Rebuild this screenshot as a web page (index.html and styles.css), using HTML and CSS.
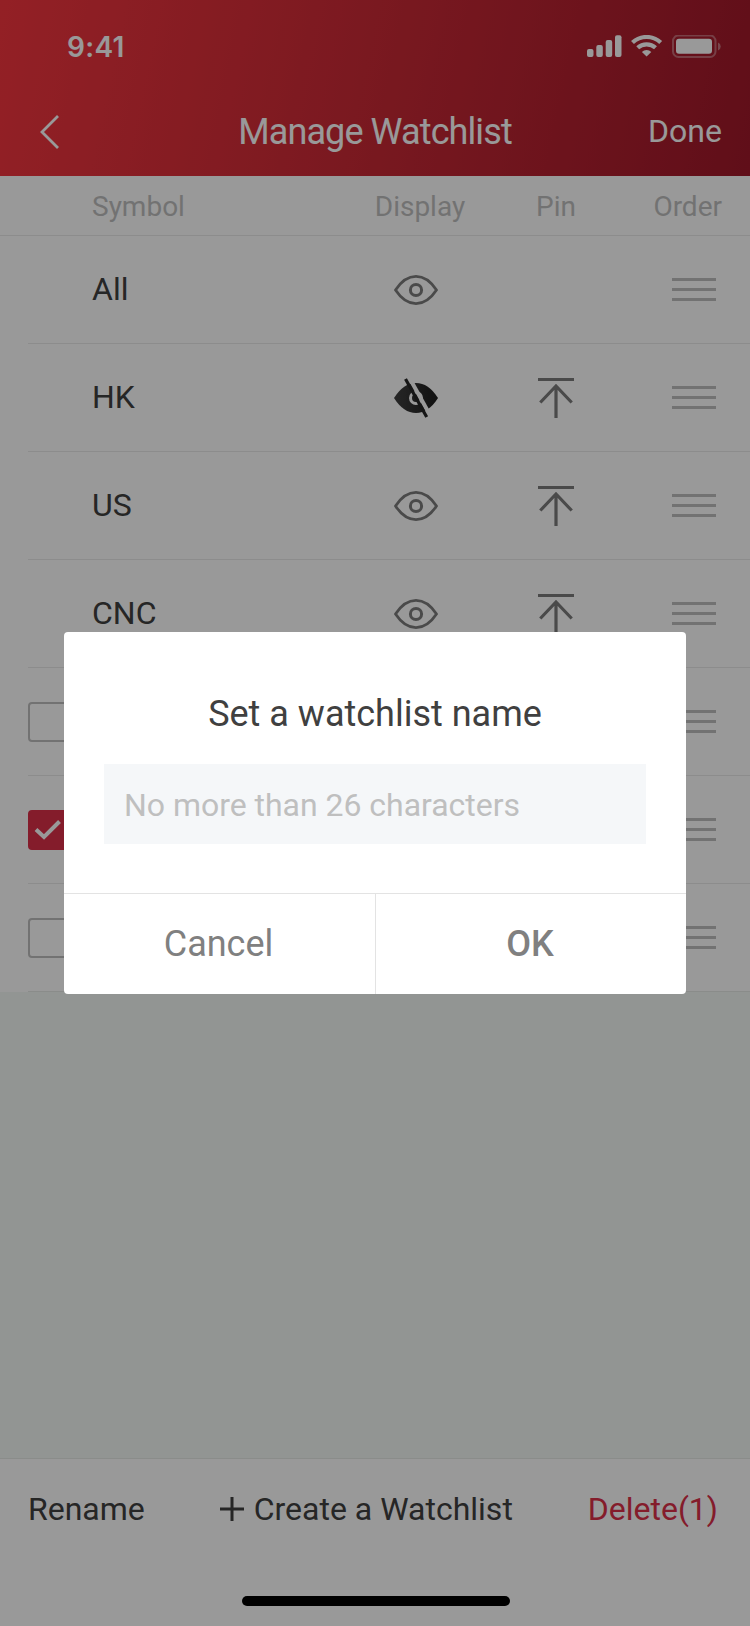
FILE: index.html
```html
<!DOCTYPE html>
<html lang="en">
<head>
<meta charset="utf-8">
<title>Manage Watchlist</title>
<link rel="stylesheet" href="styles.css">
</head>
<body>
<svg class="defs" width="0" height="0" aria-hidden="true">
  <symbol id="eye" viewBox="0 0 44 40"><path d="M1.500 20Q10.500 6.400 22 6.400T42.500 20Q33.500 33.600 22 33.600T1.500 20Z" fill="none" stroke="#7c7c7c" stroke-width="2.800" stroke-linejoin="round"/><circle cx="22" cy="20" r="5.600" fill="none" stroke="#7c7c7c" stroke-width="3"/></symbol>
  <symbol id="pin" viewBox="0 0 36 40"><path d="M0 1.500H36" stroke="#7c7c7c" stroke-width="3"/><path d="M18 40V8M2.300 24.500 18 8l15.700 16.500" fill="none" stroke="#7c7c7c" stroke-width="3.200"/></symbol>
  <symbol id="drag" viewBox="0 0 44 23"><path d="M0 1.500H44M0 11.500H44M0 21.500H44" stroke="#bfbfbf" stroke-width="3"/></symbol>
</svg>
<div class="screen">
  <header class="top">
    <div class="status">
      <span class="time">9:41</span>
      <svg class="status-icons" width="136" height="24" viewBox="0 0 136 24" fill="#fff">
        <rect x="0" y="14" width="6.500" height="8" rx="2"/><rect x="9.300" y="10" width="6.500" height="12" rx="2"/><rect x="18.700" y="5" width="6.500" height="17" rx="2"/><rect x="28" y="0.300" width="6.500" height="21.700" rx="2"/>
        <g fill="none" stroke="#fff" stroke-width="4.200"><path d="M45.500 7.600A20.500 20.500 0 0 1 73.700 7.600"/><path d="M50.700 12.800A13 13 0 0 1 68.500 12.800"/></g>
        <path d="M59.600 21.500 54.900 17A6.800 6.800 0 0 1 64.300 17Z"/>
        <rect x="86" y="0.500" width="42.500" height="21.500" rx="5.500" fill="none" stroke="#fff" stroke-opacity=".35" stroke-width="2"/>
        <rect x="89" y="3.700" width="36" height="15" rx="3"/>
        <path d="M131 7.500q2.700 1 2.700 4t-2.700 4Z" fill-opacity=".4"/>
      </svg>
    </div>
    <div class="nav">
      <svg class="back" width="20" height="36" viewBox="0 0 20 36"><path d="M18 2 2 18 18 34" fill="none" stroke="#fff" stroke-width="2.800"/></svg>
      <h1 class="title">Manage Watchlist</h1>
      <span class="done">Done</span>
    </div>
  </header>
  <div class="cols head"><span>Symbol</span><span class="c">Display</span><span class="c">Pin</span><span class="r">Order</span></div>
  <main class="list">
    <div class="cols row"><span class="name">All</span><svg class="eye"><use href="#eye"/></svg><i></i><svg class="drag"><use href="#drag"/></svg></div>
    <div class="cols row"><span class="name">HK</span>
      <svg class="eye" viewBox="0 0 44 40">
        <defs><linearGradient id="ink"><stop offset="0" stop-color="#404040"/><stop offset="1" stop-color="#1c1c1c"/></linearGradient>
        <mask id="cut"><path fill="#fff" d="M0 0H44V40H0Z"/><circle cx="22" cy="20" r="5.500" fill="none" stroke="#000" stroke-width="3"/><path d="M15.500 0 36.500 38" stroke="#000" stroke-width="4"/></mask></defs>
        <path d="M0 20Q9.500 5 22 5T44 20Q34.500 35 22 35T0 20Z" fill="url(#ink)" mask="url(#cut)"/>
        <path d="M11.500 1 32.700 39" stroke="#252525" stroke-width="3.200"/>
      </svg>
      <svg class="pin"><use href="#pin"/></svg><svg class="drag"><use href="#drag"/></svg></div>
    <div class="cols row"><span class="name">US</span><svg class="eye"><use href="#eye"/></svg><svg class="pin"><use href="#pin"/></svg><svg class="drag"><use href="#drag"/></svg></div>
    <div class="cols row"><span class="name">CNC</span><svg class="eye"><use href="#eye"/></svg><svg class="pin"><use href="#pin"/></svg><svg class="drag"><use href="#drag"/></svg></div>
    <div class="cols row checkable"><b class="box"></b><svg class="drag"><use href="#drag"/></svg></div>
    <div class="cols row checkable"><b class="box on"><svg width="28" height="22" viewBox="0 0 28 22"><path d="M2 10.500 10 18 25.500 2.500" fill="none" stroke="#fff" stroke-width="4"/></svg></b><svg class="drag"><use href="#drag"/></svg></div>
    <div class="cols row checkable"><b class="box"></b><svg class="drag"><use href="#drag"/></svg></div>
  </main>
  <footer class="actions">
    <span class="rename">Rename</span>
    <span class="create"><svg width="24" height="24" viewBox="0 0 24 24"><path d="M0 12H24M12 0V24" stroke="#404040" stroke-width="3"/></svg><span class="create-label">Create a Watchlist</span></span>
    <span class="delete">Delete(1)</span>
  </footer>
</div>
<div class="overlay">
  <section class="dialog">
    <h2 class="dialog-title">Set a watchlist name</h2>
    <div class="field">No more than 26 characters</div>
    <div class="buttons"><span class="cancel">Cancel</span><span class="ok">OK</span></div>
  </section>
  <div class="home"></div>
</div>
</body>
</html>
```
FILE: styles.css
```css
* { box-sizing: border-box; }
body { margin: 0; font-family: Roboto, "Liberation Sans", sans-serif; font-size: 32px; color: #404040; }
h1, h2 { margin: 0; font-weight: 400; font-size: 36px; }
svg { display: block; }
.defs { position: absolute; }
.screen { height: 1626px; display: flex; flex-direction: column; background: #f4f8f5; }
.top { height: 176px; color: #fff; background: linear-gradient(102deg, #f6363f 0%, #cc2a36 48%, #a0182a 100%); }
.status { height: 88px; padding: 35px 27px 0 67px; display: flex; justify-content: space-between; }
.time { font: 600 28px/25px Inter, sans-serif; letter-spacing: .3px; }
.status-icons { flex: none; }
.nav { height: 88px; padding: 0 28px 0 40px; display: grid; grid-template-columns: 104px 1fr 116px; align-items: center; }
.title { text-align: center; letter-spacing: -.9px; }
.done { text-align: right; padding-bottom: 2px; }
.cols { display: grid; align-items: center; grid-template-columns: 270px 108px 172px 1fr; }
.head { height: 60px; padding: 2px 28px 0 92px; grid-template-columns: 270px 116px 156px 1fr; font-size: 28px; color: #bfbfbf; background: #fff; border-bottom: 1px solid #e9e9e9; }
.c { text-align: center; }
.r { text-align: right; }
.list { background: #fff; padding-left: 28px; }
.row { height: 108px; padding: 0 34px 0 64px; border-bottom: 1px solid #e9e9e9; }
.row:last-child { border-bottom-color: #e6e9e7; }
.name { padding-bottom: 2px; }
.eye { width: 44px; height: 40px; margin-top: 1px; justify-self: center; }
.pin { width: 36px; height: 40px; margin-top: 1px; justify-self: center; }
.drag { width: 44px; height: 23px; justify-self: end; }
.checkable { grid-template-columns: 40px 1fr; padding-left: 0; }
.box { width: 40px; height: 40px; margin-top: 1px; border: 2px solid #bfbfbf; border-radius: 4px; display: grid; place-items: center; }
.on { background: #dc2f49; border-color: #dc2f49; }
.actions { margin-top: auto; height: 168px; padding: 0 32px 68px 28px; display: flex; align-items: center; justify-content: space-between; background: #fff; border-top: 1px solid #e6e9e7; }
.create { display: flex; align-items: center; gap: 10px; }
.delete { color: #dc2f49; }
.overlay { position: absolute; inset: 0; height: 1626px; background: rgba(0,0,0,.4); display: flex; flex-direction: column; align-items: center; padding-top: 632px; }
.dialog { width: 622px; height: 362px; flex: none; background: #fff; border-radius: 4px; display: flex; flex-direction: column; overflow: hidden; }
.dialog-title { height: 132px; padding-top: 60px; text-align: center; line-height: 44px; }
.field { margin: 0 40px 49px; height: 80px; padding-left: 20px; line-height: 82px; background: #f5f7f9; color: #bfbfbf; letter-spacing: -.03px; }
.buttons { height: 101px; display: grid; grid-template-columns: 1fr 1fr; border-top: 1px solid #e3e3e3; text-align: center; line-height: 100px; font-size: 36px; color: #808080; }
.cancel, .ok { padding-right: 2px; }
.ok { border-left: 1px solid #e3e3e3; font-weight: 500; }
.home { width: 268px; height: 10px; margin-top: 602px; margin-left: 2px; border-radius: 5px; background: #000; }
```
